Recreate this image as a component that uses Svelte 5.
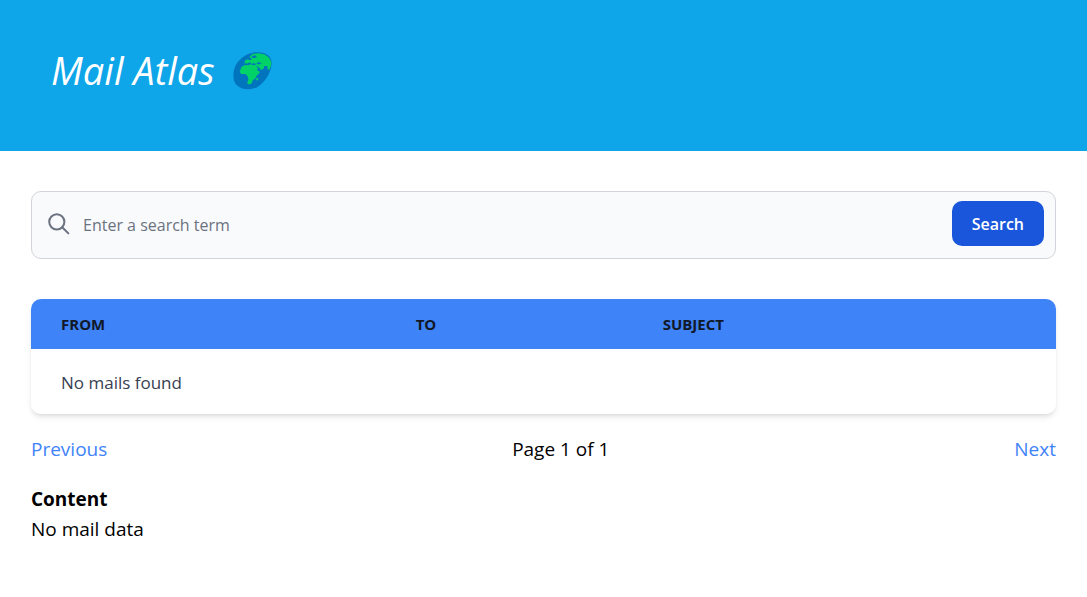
<script>
  let term = $state('');
  let page = $state(1);
  let pages = 1;
  const columns = ['From', 'To', 'Subject'];

  function search(event) {
    event.preventDefault();
    page = 1;
  }

  function go(event, step) {
    event.preventDefault();
    page = Math.min(pages, Math.max(1, page + step));
  }
</script>

<header>
  <h1>Mail Atlas</h1>
  <svg class="globe" viewBox="36 36 116 112" aria-hidden="true">
    <path fill="#0074bd" d="M97 37C119 33 151 39 151 69C151 91 136 119 115 135C95 150 63 151 46 133C33 119 35 90 47 70C58 53 76 41 97 37Z" />
    <path fill="#00d267" d="M86 49L95 41L112 39L130 43L143 52L150 66L149 78L143 90L139 86L138 77L129 77L127 85L119 89L115 83L108 85L108 90L116 94L114 99L106 106L102 115L95 119L91 129L83 132L78 128L82 117L79 107L73 101L60 101L56 94L61 80L71 74L82 75L87 72L99 75L105 72L98 68L92 71L86 66L78 70L70 69L72 60L80 58L87 60L93 54L87 53Z" />
    <path fill="#0074bd" d="M91 48L103 45L107 51L99 54L93 52ZM106 69L113 65L121 69L116 72L108 72ZM103 76L111 79L117 85L111 84Z" />
    <path fill="#00d267" d="M107 111L112 114L108 121L104 118Z" />
  </svg>
</header>

<main>
  <form class="search" onsubmit={search}>
    <svg class="lens" viewBox="0 0 22 22" fill="none" aria-hidden="true">
      <circle cx="8.8" cy="8.8" r="7.6" />
      <path d="M14.2 14.2L20.4 20.4" />
    </svg>
    <input type="search" aria-label="Search mails" placeholder="Enter a search term" bind:value={term} />
    <button type="submit">Search</button>
  </form>

  <div class="card">
    <table>
      <thead>
        <tr>
          {#each columns as column}
            <th scope="col">{column}</th>
          {/each}
        </tr>
      </thead>
      <tbody>
        <tr><td colspan={columns.length}>No mails found</td></tr>
      </tbody>
    </table>
  </div>

  <nav>
    <a href="#previous" onclick={(e) => go(e, -1)}>Previous</a>
    <span>Page {page} of {pages}</span>
    <a href="#next" onclick={(e) => go(e, 1)}>Next</a>
  </nav>

  <section>
    <h2>Content</h2>
    <p>No mail data</p>
  </section>
</main>

<style>
  :global(body) {
    margin: 0;
    background: #fff;
    color: #000;
    font: 19px/30px "Open Sans", "Noto Sans", sans-serif;
  }

  h1,
  h2,
  p {
    margin: 0;
  }

  header {
    display: flex;
    align-items: center;
    gap: 18px;
    padding: 50px 51px 60px;
    background: #0fa5e9;
    color: #fff;
  }

  h1 {
    font-size: 38px;
    font-style: italic;
    font-weight: 400;
    line-height: 41px;
  }

  .globe {
    width: 39px;
    height: 38px;
  }

  main {
    padding: 40px 31px;
  }

  .search {
    display: flex;
    align-items: center;
    gap: 13px;
    padding: 9px 11px 12px 16px;
    border: 1px solid #d1d5db;
    border-radius: 10px;
    background: #f9fafb;
  }

  .lens {
    flex: none;
    width: 22px;
    height: 22px;
    stroke: #6b7280;
    stroke-width: 2;
    stroke-linecap: round;
  }

  input {
    flex: 1;
    min-width: 0;
    padding: 4px 0 0;
    border: 0;
    outline: 0;
    background: transparent;
    color: #111827;
    font: 16px/25px "Open Sans", "Noto Sans", sans-serif;
    appearance: none;
  }

  input::placeholder {
    color: #6b7280;
    opacity: 1;
  }

  button {
    padding: 11px 20px 9px;
    border: 0;
    border-radius: 10px;
    background: #1a56db;
    color: #fff;
    font: 600 16px/25px "Open Sans", "Noto Sans", sans-serif;
    cursor: pointer;
  }

  .card {
    margin-top: 40px;
    overflow: hidden;
    border-radius: 10px;
    box-shadow: 0 4px 6px -1px rgb(0 0 0 / 0.1), 0 2px 4px -2px rgb(0 0 0 / 0.1);
  }

  table {
    width: 100%;
    border-collapse: collapse;
    table-layout: fixed;
    text-align: left;
  }

  thead {
    background: #3f83f8;
  }

  th {
    padding: 15px 30px;
    color: #111827;
    font-size: 15px;
    font-weight: 700;
    line-height: 20px;
    text-transform: uppercase;
  }

  th:nth-child(1) {
    width: 34.6%;
  }

  th:nth-child(2) {
    width: 24.1%;
  }

  th,
  td {
    box-sizing: border-box;
  }

  td {
    padding: 21px 30px 19px;
    background: #fff;
    color: #374151;
    font-size: 17px;
    line-height: 25px;
  }

  nav {
    display: flex;
    justify-content: space-between;
    margin: 20px 0;
  }

  a {
    color: #3f83f8;
    text-decoration: none;
  }

  h2 {
    font-size: 19px;
    font-weight: 700;
    line-height: 30px;
  }
</style>
